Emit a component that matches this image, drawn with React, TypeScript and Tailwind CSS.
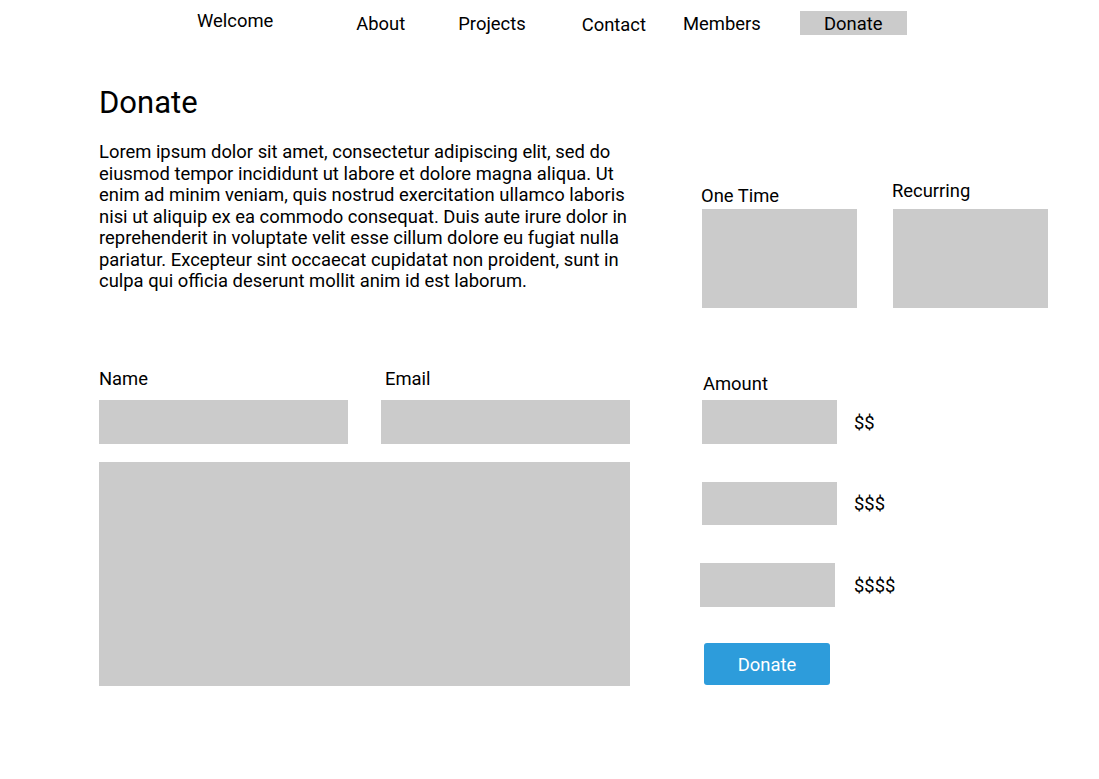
import React from 'react';

const navItems = [
  { label: 'About', cls: 'ml-[83px] mt-[13px]' },
  { label: 'Projects', cls: 'ml-[53px] mt-[13px]' },
  { label: 'Contact', cls: 'ml-[56px] mt-[14px]' },
  { label: 'Members', cls: 'ml-[37px] mt-[13px]' },
];

const amounts = [
  { label: '$$', cls: 'ml-[2px] h-[44px]', gap: 'mt-[6px]' },
  { label: '$$$', cls: 'ml-[2px] h-[43px]', gap: 'mt-[38px]' },
  { label: '$$$$', cls: 'ml-0 h-[44px]', gap: 'mt-[38px]' },
];

const App: React.FC = () => {
  return (
    <div className="w-[1099px] h-[779px] bg-white text-black font-['Roboto',sans-serif] overflow-hidden">
      {/* Top nav */}
      <nav className="h-[45px] flex items-start text-[18.4px] leading-[21px]">
        <a className="ml-[197px] mt-[10px]">Welcome</a>
        {navItems.map((item) => (
          <a key={item.label} className={item.cls}>
            {item.label}
          </a>
        ))}
        <a className="ml-[39px] mt-[11px] w-[107px] h-[24px] bg-[#cbcbcb] flex items-center justify-center pt-[1px]">
          Donate
        </a>
      </nav>

      {/* Intro + donation type */}
      <section className="flex pl-[99px]">
        <div className="w-[531px]">
          <h1 className="mt-[40px] text-[31px] leading-[36px]">Donate</h1>
          <p className="mt-[20px] w-[540px] text-[18.4px] leading-[21.5px]">
            Lorem ipsum dolor sit amet, consectetur adipiscing elit, sed do eiusmod tempor incididunt ut labore et
            dolore magna aliqua. Ut enim ad minim veniam, quis nostrud exercitation ullamco laboris nisi ut aliquip ex
            ea commodo consequat. Duis aute irure dolor in reprehenderit in voluptate velit esse cillum dolore eu
            fugiat nulla pariatur. Excepteur sint occaecat cupidatat non proident, sunt in culpa qui officia deserunt
            mollit anim id est laborum.
          </p>
        </div>
        <div className="ml-[71px] mt-[135px] flex text-[18.4px] leading-[21px]">
          <div className="flex flex-col">
            <span className="mt-[5px]">One Time</span>
            <button className="mt-[3px] ml-[1px] w-[155px] h-[99px] bg-[#cbcbcb]" />
          </div>
          <div className="flex flex-col ml-[35px]">
            <span>Recurring</span>
            <button className="mt-[8px] ml-[1px] w-[155px] h-[99px] bg-[#cbcbcb]" />
          </div>
        </div>
      </section>

      {/* Form + amount */}
      <section className="flex pl-[99px] mt-[58px] text-[18.4px] leading-[21px]">
        <div className="w-[531px]">
          <div className="flex mt-[2px]">
            <label className="w-[286px]">Name</label>
            <label>Email</label>
          </div>
          <div className="flex mt-[11px]">
            <input className="w-[249px] h-[44px] bg-[#cbcbcb] outline-none" />
            <input className="ml-[33px] w-[249px] h-[44px] bg-[#cbcbcb] outline-none" />
          </div>
          <textarea className="block mt-[18px] w-[531px] h-[224px] bg-[#cbcbcb] resize-none outline-none" />
        </div>

        <div className="ml-[70px] mt-[7px] flex flex-col">
          <span className="ml-[3px]">Amount</span>
          {amounts.map((a) => (
            <div key={a.label} className={`flex items-center ${a.gap}`}>
              <input className={`${a.cls} w-[135px] bg-[#cbcbcb] outline-none`} />
              <span className={a.label === '$$$$' ? 'ml-[19px]' : 'ml-[17px]'}>{a.label}</span>
            </div>
          ))}
          <button className="mt-[36px] ml-[4px] w-[126px] h-[42px] rounded-[3px] bg-[#2d9cdb] text-white">
            Donate
          </button>
        </div>
      </section>
    </div>
  );
};

export default App;
